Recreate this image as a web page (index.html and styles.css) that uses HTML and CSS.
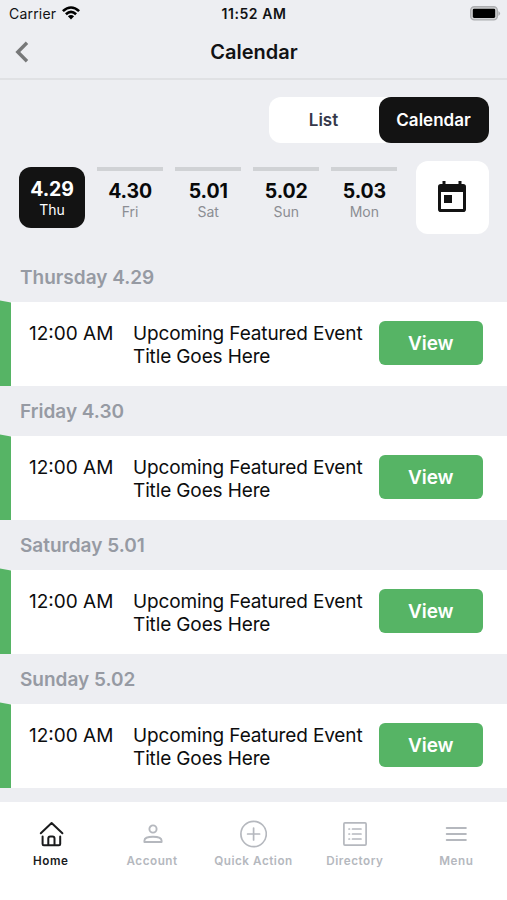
FILE: index.html
```html
<!DOCTYPE html>
<html lang="en">
<head>
<meta charset="utf-8">
<title>Calendar</title>
<link rel="stylesheet" href="styles.css">
</head>
<body>
<div class="app">
  <header class="header">
    <div class="status">
      <div class="carrier"><span>Carrier</span>
        <svg class="wifi" width="18" height="14" viewBox="0 0 18 14"><path d="M0 4.2Q9-3.8 18 4.2L16.2 6.1Q9-.5 1.800 6.100ZM3 7.300Q9 1.700 15 7.300L13.200 9.200Q9 5.400 4.800 9.200ZM5.900 10.300Q9 7.600 12.100 10.300L9 13.500Z"/></svg>
      </div>
      <div class="clock">11:52 AM</div>
      <svg class="battery" width="31" height="15" viewBox="0 0 31 15"><rect x=".7" y=".7" width="26.600" height="13.200" rx="3.600" fill="#d2d3d5" stroke="#acadb0" stroke-width="1.400"/><rect x="2.800" y="2.700" width="22.400" height="9.200" rx="1.300"/><path d="M28.400 5q3.400 2.500 0 5z" fill="#acadb0"/></svg>
    </div>
    <div class="titlebar">
      <svg class="back" width="14" height="22" viewBox="0 0 14 22"><path d="M12 1.800 2.800 11 12 20.200" fill="none" stroke="#777879" stroke-width="3.400"/></svg>
      <h1>Calendar</h1>
    </div>
  </header>
  <main>
    <div class="toggle"><button>List</button><button class="on">Calendar</button></div>
    <div class="picker">
      <div class="day on"><b>4.29</b><span>Thu</span></div>
      <div class="day"><b>4.30</b><span>Fri</span></div>
      <div class="day"><b>5.01</b><span>Sat</span></div>
      <div class="day"><b>5.02</b><span>Sun</span></div>
      <div class="day"><b>5.03</b><span>Mon</span></div>
      <button class="open"><svg width="28" height="31" viewBox="0 0 28 31" fill="#131313"><path fill-rule="evenodd" d="M4.500 0h3v3h13V0h3v3h1.700A2.800 2.800 0 0 1 28 5.800v22.400a2.800 2.800 0 0 1-2.800 2.800H2.800A2.800 2.800 0 0 1 0 28.200V5.800A2.800 2.800 0 0 1 2.800 3H4.500ZM3 11v17h22V11ZM6 14h8v8H6Z"/></svg></button>
    </div>
    <section><h2>Thursday 4.29</h2><div class="event"><time>12:00 AM</time><p>Upcoming Featured Event<br>Title Goes Here</p><button>View</button></div></section>
    <section><h2>Friday 4.30</h2><div class="event"><time>12:00 AM</time><p>Upcoming Featured Event<br>Title Goes Here</p><button>View</button></div></section>
    <section><h2>Saturday 5.01</h2><div class="event"><time>12:00 AM</time><p>Upcoming Featured Event<br>Title Goes Here</p><button>View</button></div></section>
    <section><h2>Sunday 5.02</h2><div class="event"><time>12:00 AM</time><p>Upcoming Featured Event<br>Title Goes Here</p><button>View</button></div></section>
  </main>
  <nav>
    <a class="on"><svg width="28" height="28" viewBox="0 0 28 28" stroke-width="2"><path d="M3.800 13.200 14.600 3l10.800 10.200M5.600 16.500v7.500q0 1.200 1.200 1.200H22q1.200 0 1.200-1.200v-7.500M11.300 25v-6.500q0-2 2-2h2.200q2 0 2 2V25"/></svg><span>Home</span></a>
    <a><svg width="28" height="28" viewBox="0 0 28 28" stroke-width="1.900"><circle cx="15" cy="9" r="3.600"/><path d="M6.400 22v-1.300q0-4 8.600-4t8.600 4V22Z"/></svg><span>Account</span></a>
    <a><svg width="28" height="28" viewBox="0 0 28 28" stroke-width="1.700"><circle cx="14.600" cy="14" r="12.700"/><path d="M14.600 8v12M8.600 14h12"/></svg><span>Quick Action</span></a>
    <a><svg width="28" height="28" viewBox="0 0 28 28" stroke-width="1.700"><rect x="2.900" y="2.900" width="22.200" height="22.200" rx="1"/><path d="M8 9h.5M11.500 9h8.500M8 14h.5M11.500 14h8.500M8 19h.5M11.500 19h8.500"/></svg><span>Directory</span></a>
    <a><svg width="28" height="28" viewBox="0 0 28 28" stroke-width="2.100"><path d="M4.800 8h19M4.800 14h19M4.800 20h19"/></svg><span>Menu</span></a>
  </nav>
</div>
</body>
</html>
```
FILE: styles.css
```css
* { box-sizing: border-box; }
body { margin: 0; font-family: Inter, "Liberation Sans", sans-serif; color: #111214; background: #fff; }
button { font: inherit; border: 0; padding: 0; }
h1, h2, p { margin: 0; }
svg { display: block; }
.app { width: 507px; height: 900px; overflow: hidden; display: flex; flex-direction: column; background: #edeef2; }
.header { height: 80px; border-bottom: 2px solid #e0e1e4; }
.status { height: 28px; padding: 0 6px 0 9px; display: grid; grid-template-columns: 1fr auto 1fr; align-items: center; font-size: 14px; line-height: 28px; }
.carrier { display: flex; gap: 6px; align-items: center; letter-spacing: .2px; }
.wifi { margin-top: -3px; }
.clock { font-weight: 600; letter-spacing: .55px; margin-left: -2px; }
.battery { justify-self: end; margin-top: -1px; }
.titlebar { height: 48px; display: grid; grid-template-columns: 1fr auto 1fr; align-items: center; padding: 0 15px; }
h1 { font-size: 20px; line-height: 48px; font-weight: 600; margin-left: 1px; }
main { flex: 1; }
.toggle { width: 220px; height: 45.5px; margin: 17.3px 0 0 268.5px; border-radius: 12px; background: #fff; display: flex; font-size: 17px; font-weight: 600; letter-spacing: -.1px; }
.toggle button { flex: 1; background: none; color: #35384a; border-radius: 12px; }
.toggle .on { background: #131313; color: #fff; }
.picker { height: 73.500px; margin: 18.200px 18.500px 0 19px; display: flex; align-items: center; gap: 12.100px; }
.day { width: 66px; height: 61px; border-top: 4px solid #d0d2d5; display: flex; flex-direction: column; align-items: center; padding-top: 8px; }
.day b { font-size: 19.500px; line-height: 24px; font-weight: 700; letter-spacing: -.1px; color: #08090a; }
.day span { font-size: 14px; line-height: 18px; color: #8b8d93; }
.day.on { border: 0; border-radius: 12px; background: #131313; padding-top: 10px; }
.day.on b, .day.on span { color: #fff; }
.open { width: 73px; height: 73.500px; margin-left: auto; border-radius: 12px; background: #fff; display: grid; place-items: center; padding-bottom: 2px; }
section { height: 134px; }
.picker + section { margin-top: 18px; }
h2 { height: 50px; padding-left: 20px; font-size: 19px; line-height: 51px; font-weight: 600; color: #969aa3; }
.event { height: 84px; background: #fff; padding: 0 24px 0 29px; display: flex; position: relative; font-size: 19px; line-height: 23px; color: #0c0d0e; }
.event::before { content: ""; position: absolute; left: 0; top: -2px; bottom: 0; width: 11px; background: #56b465; clip-path: polygon(0 0, 100% 2px, 100% 100%, 0 100%); }
.event time { width: 104px; padding-top: 20px; }
.event p { padding-top: 20px; white-space: nowrap; letter-spacing: -.13px; }
.event button { width: 104.500px; height: 43.500px; margin: 19px 0 0 auto; border-radius: 6px; background: #56b465; color: #fff; font-weight: 600; font-size: 19px; letter-spacing: -.1px; }
nav { height: 98px; background: #fff; display: grid; grid-template-columns: repeat(5, 1fr); padding-top: 18px; }
nav a { display: flex; flex-direction: column; align-items: center; color: #b5b8be; font-size: 11.700px; line-height: 16px; font-weight: 600; letter-spacing: .53px; white-space: nowrap; }
nav svg { fill: none; stroke: currentColor; stroke-linecap: round; stroke-linejoin: round; }
nav span { margin-top: 5px; }
nav .on { color: #1a1b1d; }
```
